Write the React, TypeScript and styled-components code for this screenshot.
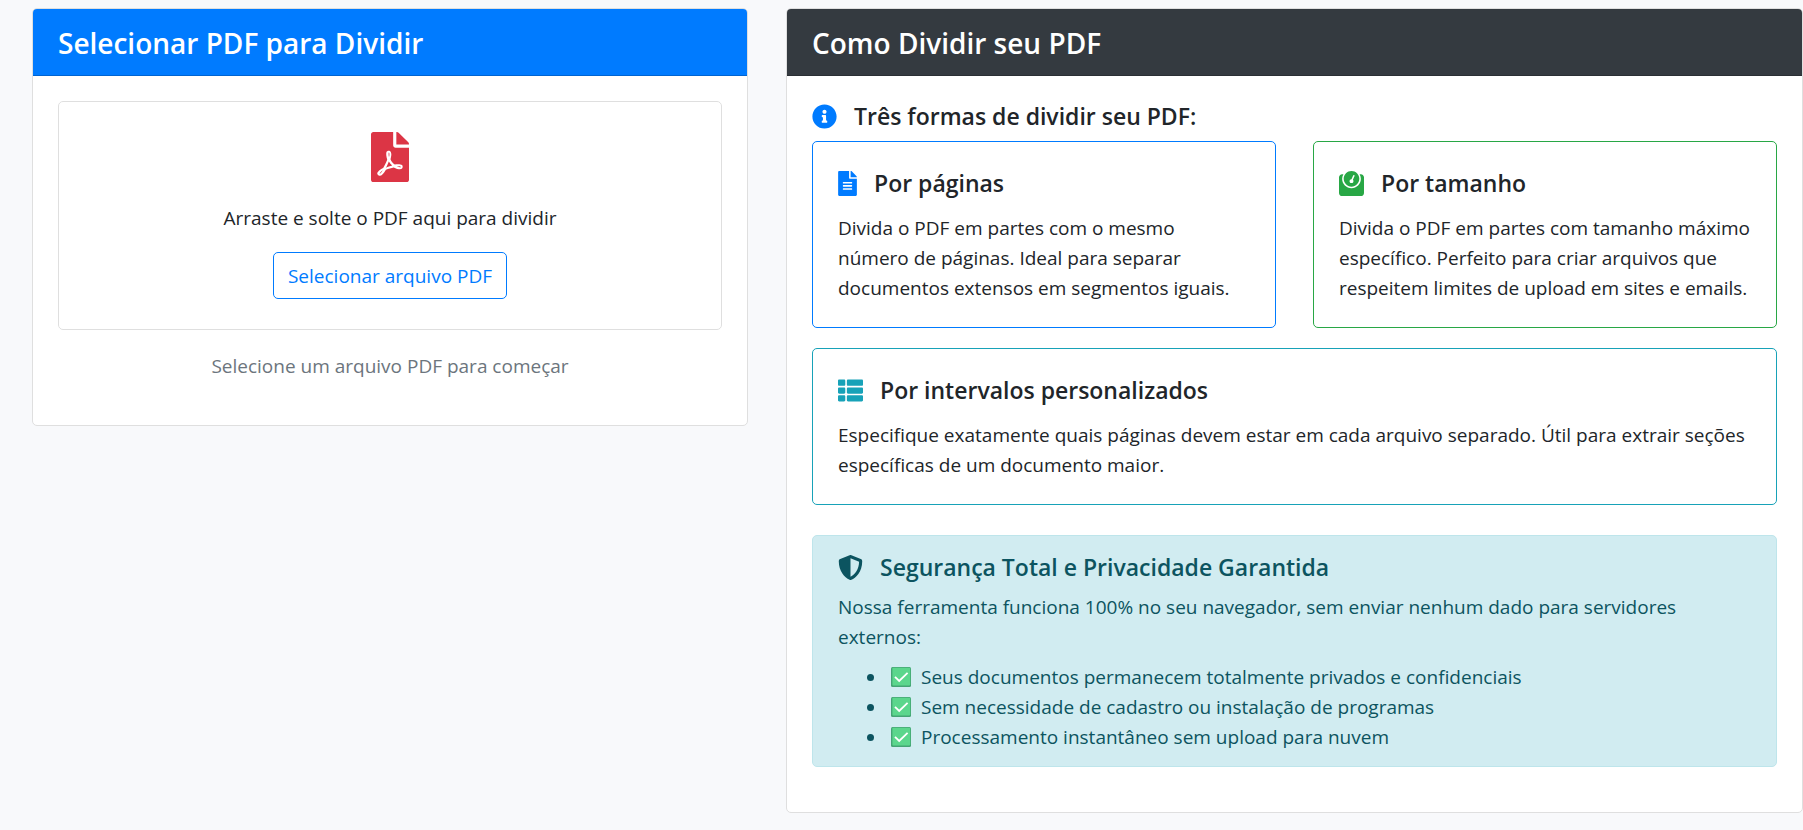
import React from 'react';
import styled, { createGlobalStyle } from 'styled-components';
import {
  FaFileAlt,
  FaFilePdf,
  FaInfoCircle,
  FaShieldAlt,
  FaThList,
  FaWeight,
} from 'react-icons/fa';

const color = {
  page: '#f8f9fb',
  text: '#212529',
  muted: '#6c757d',
  primary: '#007bff',
  dark: '#343a40',
  danger: '#dc3545',
  success: '#28a745',
  info: '#17a2b8',
  alertText: '#0c5460',
  alertBg: '#d1ecf1',
  alertBorder: '#bee5eb',
  line: '#dfdfdf',
};

const GlobalStyle = createGlobalStyle`
  *, *::before, *::after { box-sizing: border-box; }
  body {
    margin: 0;
    background: ${color.page};
    color: ${color.text};
    font-family: 'Segoe UI', 'Open Sans', 'Noto Sans', sans-serif;
    font-size: 19px;
    line-height: 30px;
  }
  h2, h3, h4, p, ul { margin: 0; }
`;

const Page = styled.main`
  display: grid;
  grid-template-columns: minmax(0, 716fr) minmax(0, 1017fr);
  align-items: start;
  gap: 38px;
  padding: 8px 0 16px 32px;
`;

const Card = styled.section`
  background: #fff;
  border: 1px solid ${color.line};
  border-radius: 5px;
  overflow: hidden;
`;

const CardHeader = styled.header<{ $bg: string }>`
  padding: 16px 25px 14px;
  background: ${(p) => p.$bg};
  border-bottom: 1px solid rgba(0, 0, 0, 0.18);
`;

const CardTitle = styled.h2`
  color: #fff;
  font-size: 28px;
  font-weight: 600;
  line-height: 36px;
`;

const CardBody = styled.div`
  padding: 25px 25px 45px;
`;

const DropZone = styled.div`
  display: flex;
  flex-direction: column;
  align-items: center;
  padding: 30px;
  border: 1px solid ${color.line};
  border-radius: 5px;
  text-align: center;
`;

const PdfIcon = styled(FaFilePdf)`
  display: block;
  width: 38px;
  height: 50px;
  color: ${color.danger};
`;

const DropText = styled.p`
  padding: 21px 0 19px;
`;

const SelectButton = styled.button`
  padding: 8px 14px 7px;
  background: transparent;
  border: 1px solid ${color.primary};
  border-radius: 5px;
  color: ${color.primary};
  font: inherit;
  cursor: pointer;

  &:hover {
    background: ${color.primary};
    color: #fff;
  }
`;

const Status = styled.p`
  padding-top: 21px;
  margin-bottom: -1px;
  color: ${color.muted};
  text-align: center;
`;

const Heading = styled.h3<{ $gap: number }>`
  display: flex;
  align-items: center;
  gap: 17px;
  margin-bottom: ${(p) => p.$gap}px;
  font-size: 23px;
  font-weight: 600;
  line-height: 30px;
`;

const HeadingIcon = styled.span<{ $color?: string; $narrow?: boolean }>`
  display: block;
  flex: none;
  width: ${(p) => (p.$narrow ? 19 : 25)}px;
  color: ${(p) => p.$color ?? 'inherit'};

  svg {
    display: block;
    width: 100%;
    height: 25px;
  }
`;

const Methods = styled.div`
  display: grid;
  grid-template-columns: repeat(2, minmax(0, 1fr));
  gap: 20px 37px;
  margin-bottom: 30px;
`;

const Method = styled.article<{ $accent: string; $wide?: boolean }>`
  grid-column: ${(p) => (p.$wide ? '1 / -1' : 'auto')};
  padding: 26px 25px 24px;
  border: 1px solid ${(p) => p.$accent};
  border-radius: 5px;
`;

const Alert = styled.aside`
  padding: 16px 25px 14px;
  background: ${color.alertBg};
  border: 1px solid ${color.alertBorder};
  border-radius: 5px;
  color: ${color.alertText};
`;

const Benefits = styled.ul`
  margin-top: 10px;
  padding-left: 29px;
  list-style: none;
`;

const Benefit = styled.li`
  display: flex;
  align-items: center;
  gap: 10px;

  &::before {
    content: '';
    flex: none;
    width: 7px;
    height: 7px;
    margin-right: 7px;
    border-radius: 50%;
    background: currentColor;
  }
`;

const CheckSvg = styled.svg`
  flex: none;
  width: 20px;
  height: 20px;
`;

function CheckMark() {
  return (
    <CheckSvg viewBox="0 0 20 20" aria-hidden="true">
      <rect width="20" height="20" rx="1.5" fill="#44a574" />
      <rect x="1.4" y="0.8" width="17.8" height="17.6" rx="0.8" fill="#5bd68c" />
      <path d="M4 9.8 L8.2 14 L16.6 5.8" fill="none" stroke="#fff" strokeWidth="1.8" />
    </CheckSvg>
  );
}

const methods = [
  {
    title: 'Por páginas',
    icon: <FaFileAlt />,
    narrowIcon: true,
    accent: color.primary,
    text: 'Divida o PDF em partes com o mesmo número de páginas. Ideal para separar documentos extensos em segmentos iguais.',
  },
  {
    title: 'Por tamanho',
    icon: <FaWeight />,
    accent: color.success,
    text: 'Divida o PDF em partes com tamanho máximo específico. Perfeito para criar arquivos que respeitem limites de upload em sites e emails.',
  },
  {
    title: 'Por intervalos personalizados',
    icon: <FaThList />,
    accent: color.info,
    wide: true,
    text: 'Especifique exatamente quais páginas devem estar em cada arquivo separado. Útil para extrair seções específicas de um documento maior.',
  },
];

const benefits = [
  'Seus documentos permanecem totalmente privados e confidenciais',
  'Sem necessidade de cadastro ou instalação de programas',
  'Processamento instantâneo sem upload para nuvem',
];

export default function App() {
  return (
    <>
      <GlobalStyle />
      <Page>
        <Card>
          <CardHeader $bg={color.primary}>
            <CardTitle>Selecionar PDF para Dividir</CardTitle>
          </CardHeader>
          <CardBody>
            <DropZone>
              <PdfIcon preserveAspectRatio="none" />
              <DropText>Arraste e solte o PDF aqui para dividir</DropText>
              <SelectButton type="button">Selecionar arquivo PDF</SelectButton>
            </DropZone>
            <Status>Selecione um arquivo PDF para começar</Status>
          </CardBody>
        </Card>

        <Card>
          <CardHeader $bg={color.dark}>
            <CardTitle>Como Dividir seu PDF</CardTitle>
          </CardHeader>
          <CardBody>
            <Heading $gap={10}>
              <HeadingIcon $color={color.primary}>
                <FaInfoCircle />
              </HeadingIcon>
              Três formas de dividir seu PDF:
            </Heading>
            <Methods>
              {methods.map((m) => (
                <Method key={m.title} $accent={m.accent} $wide={m.wide}>
                  <Heading as="h4" $gap={15}>
                    <HeadingIcon $color={m.accent} $narrow={m.narrowIcon}>
                      {m.icon}
                    </HeadingIcon>
                    {m.title}
                  </Heading>
                  <p>{m.text}</p>
                </Method>
              ))}
            </Methods>
            <Alert>
              <Heading $gap={10}>
                <HeadingIcon>
                  <FaShieldAlt />
                </HeadingIcon>
                Segurança Total e Privacidade Garantida
              </Heading>
              <p>
                Nossa ferramenta funciona 100% no seu navegador, sem enviar nenhum dado para
                servidores externos:
              </p>
              <Benefits>
                {benefits.map((b) => (
                  <Benefit key={b}>
                    <CheckMark />
                    {b}
                  </Benefit>
                ))}
              </Benefits>
            </Alert>
          </CardBody>
        </Card>
      </Page>
    </>
  );
}
